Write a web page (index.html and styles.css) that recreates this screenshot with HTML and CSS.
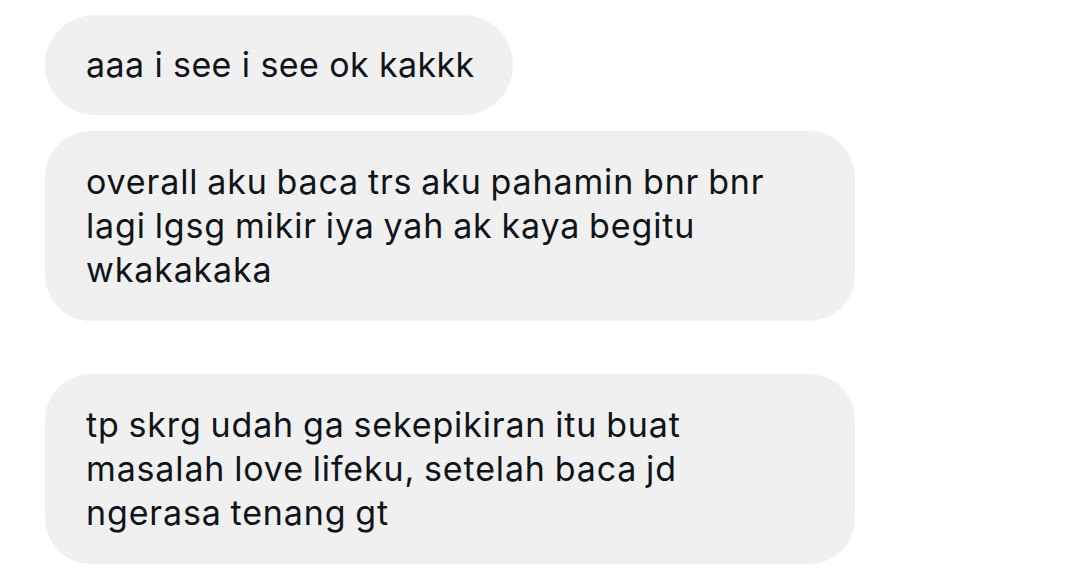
FILE: index.html
```html
<!DOCTYPE html>
<html>
<head>
<meta charset="utf-8">
<link rel="stylesheet" href="styles.css">
</head>
<body>
<div class="chat">
  <div class="bubble short"><span class="txt">aaa i see i see ok kakkk</span></div>
  <div class="bubble wide"><span class="txt narrow">overall aku baca trs aku pahamin bnr bnr<br>lagi lgsg mikir iya yah ak kaya begitu<br>wkakakaka</span></div>
  <div class="bubble wide later"><span class="txt narrow">tp skrg udah ga sekepikiran itu buat<br>masalah love lifeku, setelah baca jd<br>ngerasa tenang gt</span></div>
</div>
</body>
</html>
```

FILE: styles.css
```css
html, body {
  margin: 0;
  padding: 0;
  background: #ffffff;
}
.chat {
  display: flex;
  flex-direction: column;
  align-items: flex-start;
  gap: 16px;
  padding: 15px 0 0 45px;
  font-family: Inter, "Noto Sans", sans-serif;
  font-size: 34px;
  line-height: 44px;
  color: #0f1419;
}
.bubble {
  background: #f0f0f0;
  border-radius: 50px;
  padding: 28px 38px 28px 41px;
}
.short {
  height: 44px;
}
.txt {
  display: block;
  white-space: nowrap;
  letter-spacing: 0.4px;
}
.wide {
  width: 731px;
  border-radius: 46px;
  padding-top: 29px;
  padding-bottom: 29px;
}
.later {
  margin-top: 37px;
}
.narrow {
  letter-spacing: 0.85px;
  word-spacing: -1.5px;
}
```
